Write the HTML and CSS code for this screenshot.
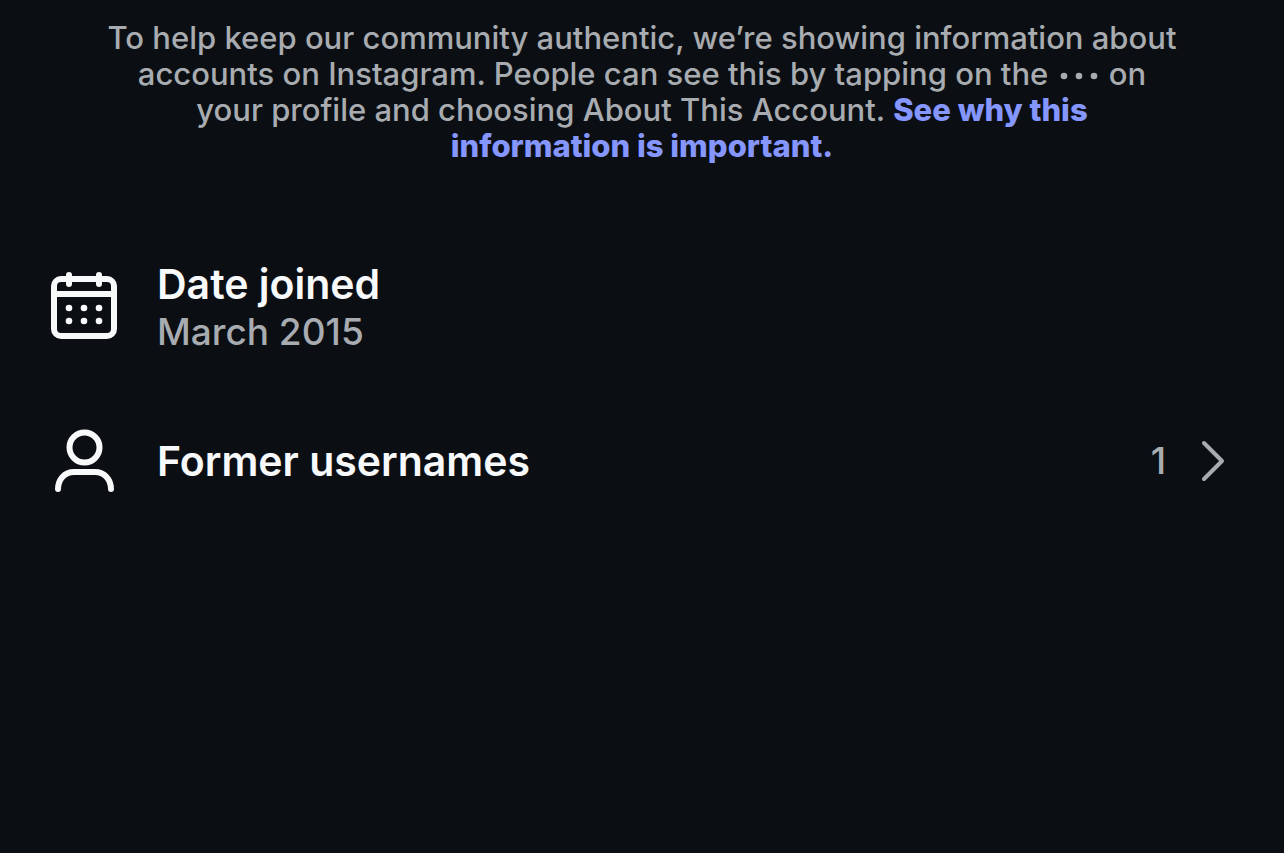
FILE: index.html
```html
<!DOCTYPE html>
<html lang="en">
<head>
    <meta charset="UTF-8">
    <meta name="viewport" content="width=device-width, initial-scale=1.0">
    <title>About This Account</title>
    <link rel="stylesheet" href="styles.css">
</head>
<body>
    <p class="intro">
        To help keep our community authentic, we’re showing information about
        accounts on Instagram. People can see this by tapping on the
        <svg class="dots" viewBox="0 0 44 8" role="img" aria-label="more menu">
            <circle cx="7" cy="4" r="3.3"/>
            <circle cx="22" cy="4" r="3.3"/>
            <circle cx="37" cy="4" r="3.3"/>
        </svg>
        on<br>
        your profile and choosing About This Account. <a href="#">See why this<br>
        information is important.</a>
    </p>

    <main class="rows">
        <div class="row">
            <svg class="icon" viewBox="0 0 72 72" aria-hidden="true">
                <rect x="6" y="8" width="60" height="57" rx="7"/>
                <path d="M6 23h60M21 4v9M51 4v9"/>
                <g class="days">
                    <circle cx="21" cy="37" r="3.3"/>
                    <circle cx="36" cy="37" r="3.3"/>
                    <circle cx="51" cy="37" r="3.3"/>
                    <circle cx="21" cy="50" r="3.3"/>
                    <circle cx="36" cy="50" r="3.3"/>
                    <circle cx="51" cy="50" r="3.3"/>
                </g>
            </svg>
            <div class="text">
                <div class="title">Date joined</div>
                <div class="value">March 2015</div>
            </div>
        </div>

        <button type="button" class="row">
            <svg class="icon" viewBox="0 0 72 72" aria-hidden="true">
                <circle cx="36.5" cy="22.500" r="15"/>
                <path d="M10 64c0-9.500 6.500-17 16-17h21c9.500 0 16 7.500 16 17"/>
            </svg>
            <span class="title">Former usernames</span>
            <span class="value count">1</span>
            <svg class="chevron" viewBox="0 0 26 42" aria-hidden="true">
                <path d="M4 3l18 18L4 39"/>
            </svg>
        </button>
    </main>
</body>
</html>
```

FILE: styles.css
```css
body {
    margin: 0;
    padding: 20px 48px;
    background-color: #0b0f14;
    color: #f8f9fb;
    font-family: Inter, "Liberation Sans", sans-serif;
}
.intro {
    max-width: 1100px;
    margin: 0 auto;
    color: #a8acb0;
    font-size: 31px;
    font-weight: 500;
    line-height: 36px;
    text-align: center;
}
.intro a {
    color: #8696ff;
    font-weight: 800;
    text-decoration: none;
}
.dots {
    width: 44px;
    height: 8px;
    fill: #a8acb0;
    vertical-align: 5px;
}
.rows {
    margin-top: 89px;
}
.row {
    display: flex;
    align-items: center;
    width: 100%;
    min-height: 108px;
    margin-bottom: 46px;
    padding: 0;
    border: none;
    background: none;
    color: inherit;
    font-family: inherit;
    text-align: left;
}
button.row {
    cursor: pointer;
}
.icon {
    flex: none;
    width: 72px;
    height: 72px;
    margin-right: 37px;
    fill: none;
    stroke: #f8f9fb;
    stroke-width: 6;
    stroke-linecap: round;
    stroke-linejoin: round;
}
.days {
    fill: #f8f9fb;
    stroke: none;
}
.title {
    font-size: 41px;
    font-weight: 600;
    line-height: 50px;
}
.value {
    color: #a8acb0;
    font-size: 37px;
    font-weight: 500;
    line-height: 46px;
}
.count {
    margin-left: auto;
}
.chevron {
    flex: none;
    width: 26px;
    height: 42px;
    margin: 0 10px 0 34px;
    fill: none;
    stroke: #a8acb0;
    stroke-width: 4;
    stroke-linecap: round;
    stroke-linejoin: round;
}
```
